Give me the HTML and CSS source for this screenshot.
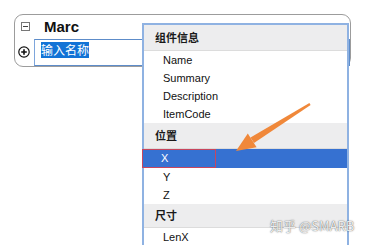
FILE: index.html
```html
<!DOCTYPE html>
<html lang="zh">
<head>
    <meta charset="UTF-8">
    <title>组件信息</title>
    <link rel="stylesheet" href="styles.css">
</head>
<body>
    <div class="tree">
        <div class="tree-row">
            <span class="icon-minus"></span>
            <span class="node-name">Marc</span>
        </div>
        <div class="tree-row tree-row-input">
            <span class="icon-plus">
                <svg width="12" height="12" viewBox="0 0 12 12">
                    <circle cx="6" cy="6" r="5.2" fill="#fff" stroke="#111" stroke-width="1.2"/>
                    <path d="M3.2 6h5.6M6 3.2v5.6" stroke="#111" stroke-width="1.6"/>
                </svg>
            </span>
            <div class="name-input"><span class="selected-text">输入名称</span></div>
        </div>
    </div>

    <!-- 弹出菜单 -->
    <div class="menu">
        <div class="menu-group">组件信息</div>
        <div class="menu-item">Name</div>
        <div class="menu-item">Summary</div>
        <div class="menu-item">Description</div>
        <div class="menu-item">ItemCode</div>
        <div class="menu-group">位置</div>
        <div class="menu-item active"><span class="mark">X</span></div>
        <div class="menu-item">Y</div>
        <div class="menu-item">Z</div>
        <div class="menu-group short">尺寸</div>
        <div class="menu-item">LenX</div>
    </div>

    <svg class="arrow" width="367" height="245" viewBox="0 0 367 245">
        <polygon fill="#f0883a" points="310.6,104.9 309.4,103.1 250.5,137.5 254,143.1"/>
        <polygon fill="#f0883a" points="236,151 247.8,133.6 256.6,147.2"/>
    </svg>

    <div class="watermark">知乎 @SMARB</div>
</body>
</html>
```

FILE: styles.css
```css
/* Загальне */
body {
    margin: 0;
    background: #fff;
    font-family: 'Liberation Sans', 'Noto Sans CJK SC', sans-serif;
    width: 367px;
    height: 245px;
    overflow: hidden;
}

/* Дерево */
.tree {
    margin: 14px 0 0 14px;
    width: 337px;
    height: 53px;
    box-sizing: border-box;
    border: 1px solid #9c9c9c;
    border-radius: 9px;
    padding-left: 3px;
}

.tree-row {
    display: flex;
    align-items: center;
    height: 23px;
}

.tree-row-input {
    height: 28px;
}

.icon-minus {
    width: 7px;
    height: 7px;
    margin-left: 3px;
    margin-right: 14px;
    border: 1px solid #777;
    position: relative;
}

.icon-minus::after {
    content: '';
    position: absolute;
    left: 1px;
    right: 1px;
    top: 3px;
    height: 1px;
    background: #444;
}

.node-name {
    font-weight: bold;
    font-size: 15px;
    color: #111;
}

.icon-plus {
    width: 12px;
    height: 12px;
    margin-right: 4px;
    display: flex;
}

.name-input {
    flex: 1;
    height: 27px;
    box-sizing: border-box;
    border: 1px solid #5d8cc9;
    border-left-color: #7ea6dc;
    padding: 2px 0 0 6px;
    display: flex;
    align-items: flex-start;
}

.selected-text {
    background: #1273d6;
    color: #fff;
    font-size: 12px;
    line-height: 16px;
    font-family: 'Noto Sans CJK SC', sans-serif;
}

/* Меню */
.menu {
    position: absolute;
    left: 142px;
    top: 23px;
    width: 207px;
    height: 222px;
    box-sizing: border-box;
    background: #fff;
    border: 2px solid #8fb2e2;
    border-bottom: none;
    font-size: 11px;
    color: #111;
}

.menu-group {
    height: 25px;
    line-height: 25px;
    padding-left: 11px;
    background: #ededee;
    border-bottom: 1px solid #dcdcdc;
    font-family: 'Noto Sans CJK SC', sans-serif;
    font-weight: bold;
    font-size: 11px;
    color: #1a1a1a;
}

.menu-group.short {
    height: 23px;
    line-height: 23px;
}

.menu-item {
    height: 18px;
    line-height: 18px;
    padding-left: 19px;
}

.menu-item.active {
    height: 19px;
    padding-left: 0;
    margin-left: -2px;
    background: #3671d1;
    color: #fff;
}

.mark {
    display: block;
    width: 74px;
    height: 19px;
    box-sizing: border-box;
    border: 1px solid #c8465e;
    padding-left: 18px;
    line-height: 17px;
}

.arrow {
    position: absolute;
    left: 0;
    top: 0;
}

.watermark {
    position: absolute;
    left: 270px;
    top: 216px;
    font-family: 'Noto Sans CJK SC', sans-serif;
    font-size: 13px;
    color: rgba(255, 255, 255, 0.9);
    text-shadow: 0 0 1px rgba(0, 0, 0, 0.55), 0 0 2px rgba(0, 0, 0, 0.35);
    white-space: nowrap;
}
```
